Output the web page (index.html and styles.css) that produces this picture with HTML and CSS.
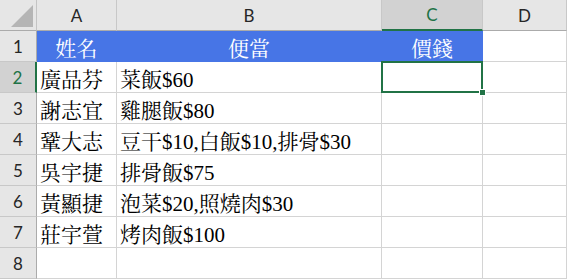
FILE: index.html
```html
<!DOCTYPE html>
<html lang="zh-Hant">

<head>
  <meta charset="UTF-8">
  <title>便當</title>
  <link rel="stylesheet" href="styles.css">
</head>

<body>

  <div class="sheet">
    <div class="corner">
      <svg width="36" height="31" viewBox="0 0 36 31">
        <polygon points="11,27 33,27 33,5" fill="#b5b5b5" />
      </svg>
    </div>
    <div class="col-head">A</div>
    <div class="col-head">B</div>
    <div class="col-head active">C</div>
    <div class="col-head">D</div>

    <div class="row-head">1</div>
    <div class="cell title">姓名</div>
    <div class="cell title">便當</div>
    <div class="cell title">價錢</div>
    <div class="cell"></div>

    <div class="row-head active">2</div>
    <div class="cell">廣品芬</div>
    <div class="cell">菜飯$60</div>
    <div class="cell selected"><span class="handle"></span></div>
    <div class="cell"></div>

    <div class="row-head">3</div>
    <div class="cell">謝志宜</div>
    <div class="cell">雞腿飯$80</div>
    <div class="cell"></div>
    <div class="cell"></div>

    <div class="row-head">4</div>
    <div class="cell">鞏大志</div>
    <div class="cell">豆干$10,白飯$10,排骨$30</div>
    <div class="cell"></div>
    <div class="cell"></div>

    <div class="row-head">5</div>
    <div class="cell">吳宇捷</div>
    <div class="cell">排骨飯$75</div>
    <div class="cell"></div>
    <div class="cell"></div>

    <div class="row-head">6</div>
    <div class="cell">黃顯捷</div>
    <div class="cell">泡菜$20,照燒肉$30</div>
    <div class="cell"></div>
    <div class="cell"></div>

    <div class="row-head">7</div>
    <div class="cell">莊宇萱</div>
    <div class="cell">烤肉飯$100</div>
    <div class="cell"></div>
    <div class="cell"></div>

    <div class="row-head">8</div>
    <div class="cell"></div>
    <div class="cell"></div>
    <div class="cell"></div>
    <div class="cell"></div>
  </div>

</body>

</html>
```

FILE: styles.css
```css
body {
  margin: 0;
  background: #ffffff;
}

.sheet {
  display: grid;
  grid-template-columns: 37px 80px 265px 101px 84px;
  grid-template-rows: repeat(9, 31px);
  width: 567px;
}

.corner {
  background: #e6e6e6;
  border-right: 1px solid #c4c4c4;
  border-bottom: 1px solid #ababab;
}

.corner svg {
  display: block;
}

.col-head {
  display: flex;
  align-items: center;
  justify-content: center;
  background: #e6e6e6;
  border-right: 1px solid #c8c8c8;
  border-bottom: 1px solid #ababab;
  font-family: Lato, "Liberation Sans", sans-serif;
  font-size: 17px;
  color: #262626;
}

.col-head.active {
  background: #d2d2d2;
  border-bottom: 2px solid #217346;
  color: #217346;
}

.row-head {
  display: flex;
  align-items: center;
  justify-content: center;
  background: #e6e6e6;
  border-right: 1px solid #ababab;
  border-bottom: 1px solid #c8c8c8;
  font-family: Lato, "Liberation Sans", sans-serif;
  font-size: 17px;
  color: #262626;
}

.row-head.active {
  background: #d2d2d2;
  border-right: 2px solid #217346;
  color: #217346;
}

.cell {
  display: flex;
  align-items: center;
  padding: 1px 3px 0;
  border-right: 1px solid #d4d4d4;
  border-bottom: 1px solid #d4d4d4;
  font-family: "Liberation Serif", "Noto Serif CJK TC", "Noto Sans CJK TC", serif;
  font-size: 21px;
  color: #000000;
  white-space: nowrap;
}

.cell.title {
  justify-content: center;
  background: #4775e6;
  border-color: #4775e6;
  color: #ffffff;
}

.cell.selected {
  position: relative;
}

.cell.selected::before {
  content: "";
  position: absolute;
  left: -1px;
  top: -1px;
  right: -1px;
  bottom: -1px;
  border: 2px solid #217346;
}

.handle {
  position: absolute;
  right: -4px;
  bottom: -4px;
  width: 5px;
  height: 5px;
  background: #217346;
  border: 1px solid #ffffff;
}
```
